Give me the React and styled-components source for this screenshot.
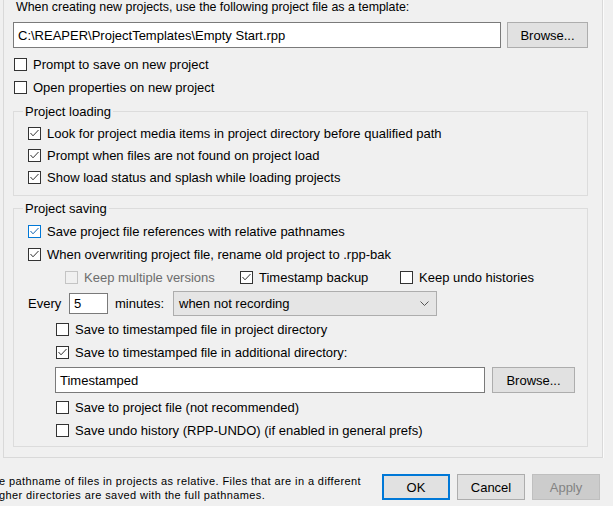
import React from "react";
import styled, { createGlobalStyle } from "styled-components";

const GlobalStyle = createGlobalStyle`
  html, body {
    margin: 0;
    padding: 0;
    background: #f0f0f0;
  }
  body {
    font-family: "Liberation Sans", Arial, sans-serif;
    font-size: 13px;
    color: #000;
    overflow: hidden;
  }
`;

const Window = styled.div`
  width: 613px;
  height: 506px;
  overflow: hidden;
  background: #f0f0f0;
`;

const Page = styled.div`
  box-sizing: border-box;
  margin-left: 3px;
  width: 600px;
  height: 458px;
  border: 1px solid #d9d9d9;
  border-top: none;
  box-shadow: 1px 0 0 #fbfbfb;
  padding-left: 9px;
  display: flex;
  flex-direction: column;
`;

const Caption = styled.div`
  margin-left: 3px;
  height: 15px;
  line-height: 15px;
  font-size: 12.4px;
  white-space: nowrap;
`;

const PathRow = styled.div`
  display: flex;
  gap: ${(p) => p.$gap || 6}px;
  margin: ${(p) => p.$margin || "7px 0 0 0"};
  height: 26px;
`;

const TextBox = styled.div`
  box-sizing: border-box;
  width: ${(p) => p.$w}px;
  height: ${(p) => p.$h || 26}px;
  background: #fff;
  border: 1px solid #7a7a7a;
  padding-left: 4px;
  display: flex;
  align-items: center;
  white-space: nowrap;
  overflow: hidden;
`;

const Button = styled.div`
  box-sizing: border-box;
  width: ${(p) => p.$w || 68}px;
  height: 26px;
  display: flex;
  align-items: center;
  justify-content: center;
  background: ${(p) => (p.$disabled ? "#cccccc" : "#e1e1e1")};
  border: ${(p) =>
    p.$default ? "2px solid #0078d7" : p.$disabled ? "1px solid #bfbfbf" : "1px solid #adadad"};
  color: ${(p) => (p.$disabled ? "#838383" : "#000")};
`;

const Row = styled.div`
  display: flex;
  align-items: center;
  height: ${(p) => p.$h || 23}px;
  padding-left: ${(p) => p.$indent || 0}px;
  white-space: nowrap;
`;

const Item = styled.label`
  display: flex;
  align-items: center;
  gap: 6px;
  width: ${(p) => (p.$w ? `${p.$w}px` : "auto")};
  color: ${(p) => (p.$disabled ? "#6d6d6d" : "#000")};
`;

const Box = styled.span`
  box-sizing: border-box;
  width: 13px;
  height: 13px;
  flex: 0 0 13px;
  display: flex;
  align-items: center;
  justify-content: center;
  background: ${(p) => (p.$disabled ? "#f0f0f0" : "#fff")};
  border: 1px solid
    ${(p) => (p.$disabled ? "#c4c4c4" : p.$hot ? "#0078d7" : "#333333")};
`;

const Group = styled.fieldset`
  margin: 5px 0 0 0;
  padding: 0;
  width: 575px;
  box-sizing: border-box;
  border: 1px solid #dcdcdc;
  min-width: 0;
`;

const Legend = styled.legend`
  margin-left: 9px;
  padding: 0 2px;
  line-height: 15px;
  height: 15px;
`;

const GroupBody = styled.div`
  padding: ${(p) => p.$pad};
  display: flex;
  flex-direction: column;
`;

const Label = styled.span`
  width: ${(p) => p.$w}px;
  flex: 0 0 ${(p) => p.$w}px;
`;

const Combo = styled.div`
  box-sizing: border-box;
  width: 264px;
  height: 25px;
  background: #e5e5e5;
  border: 1px solid #adadad;
  padding: 0 7px 0 5px;
  display: flex;
  align-items: center;
  justify-content: space-between;
`;

const Footer = styled.div`
  display: flex;
  align-items: center;
  padding-top: 14px;
  gap: 7px;
`;

const Note = styled.div`
  width: 383px;
  margin: 2px -7px 0 -1px;
  font-size: 11px;
  letter-spacing: 0.4px;
  line-height: 14px;
  white-space: nowrap;
  overflow: hidden;
`;

function Check({ checked, disabled, hot, children, w }) {
  return (
    <Item $w={w} $disabled={disabled}>
      <Box $disabled={disabled} $hot={hot}>
        {checked && (
          <svg width="11" height="11" viewBox="0 0 11 11">
            <polyline
              points="1.5,5 4,7.8 9.5,2"
              fill="none"
              stroke={hot ? "#1565b0" : "#333"}
              strokeWidth="1"
            />
          </svg>
        )}
      </Box>
      {children}
    </Item>
  );
}

export default function App() {
  return (
    <Window>
      <GlobalStyle />
      <Page>
        <Caption>When creating new projects, use the following project file as a template:</Caption>
        <PathRow>
          <TextBox $w={488}>C:\REAPER\ProjectTemplates\Empty Start.rpp</TextBox>
          <Button $w={81}>Browse...</Button>
        </PathRow>

        <div style={{ marginTop: 5 }}>
          <Row $indent={1}>
            <Check>Prompt to save on new project</Check>
          </Row>
          <Row $indent={1}>
            <Check>Open properties on new project</Check>
          </Row>
        </div>

        <Group>
          <Legend>Project loading</Legend>
          <GroupBody $pad="3px 0 7px 14px">
            <Row $h={22}>
              <Check checked>Look for project media items in project directory before qualified path</Check>
            </Row>
            <Row $h={22}>
              <Check checked>Prompt when files are not found on project load</Check>
            </Row>
            <Row $h={22}>
              <Check checked>Show load status and splash while loading projects</Check>
            </Row>
          </GroupBody>
        </Group>

        <Group>
          <Legend>Project saving</Legend>
          <GroupBody $pad="4px 0 4px 14px">
            <Row>
              <Check checked hot>Save project file references with relative pathnames</Check>
            </Row>
            <Row>
              <Check checked>When overwriting project file, rename old project to .rpp-bak</Check>
            </Row>
            <Row $indent={37}>
              <Check disabled w={175}>Keep multiple versions</Check>
              <Check checked w={160}>Timestamp backup</Check>
              <Check>Keep undo histories</Check>
            </Row>
            <Row $h={29}>
              <Label $w={41}>Every</Label>
              <TextBox $w={39} $h={21}>5</TextBox>
              <Label $w={58} style={{ marginLeft: 7 }}>minutes:</Label>
              <Combo>
                <span>when not recording</span>
                <svg width="9" height="5" viewBox="0 0 9 5">
                  <polyline points="0.5,0.5 4.5,4.5 8.5,0.5" fill="none" stroke="#555" strokeWidth="1" />
                </svg>
              </Combo>
            </Row>
            <Row $indent={28}>
              <Check>Save to timestamped file in project directory</Check>
            </Row>
            <Row $indent={28}>
              <Check checked>Save to timestamped file in additional directory:</Check>
            </Row>
            <PathRow $margin="3px 0 3px 27px" $gap={7}>
              <TextBox $w={430}>Timestamped</TextBox>
              <Button $w={83}>Browse...</Button>
            </PathRow>
            <Row $indent={28}>
              <Check>Save to project file (not recommended)</Check>
            </Row>
            <Row $indent={28}>
              <Check>Save undo history (RPP-UNDO) (if enabled in general prefs)</Check>
            </Row>
          </GroupBody>
        </Group>
      </Page>

      <Footer>
        <Note>
          e pathname of files in projects as relative. Files that are in a different
          <br />
          gher directories are saved with the full pathnames.
        </Note>
        <Button $default>OK</Button>
        <Button>Cancel</Button>
        <Button $disabled>Apply</Button>
      </Footer>
    </Window>
  );
}
